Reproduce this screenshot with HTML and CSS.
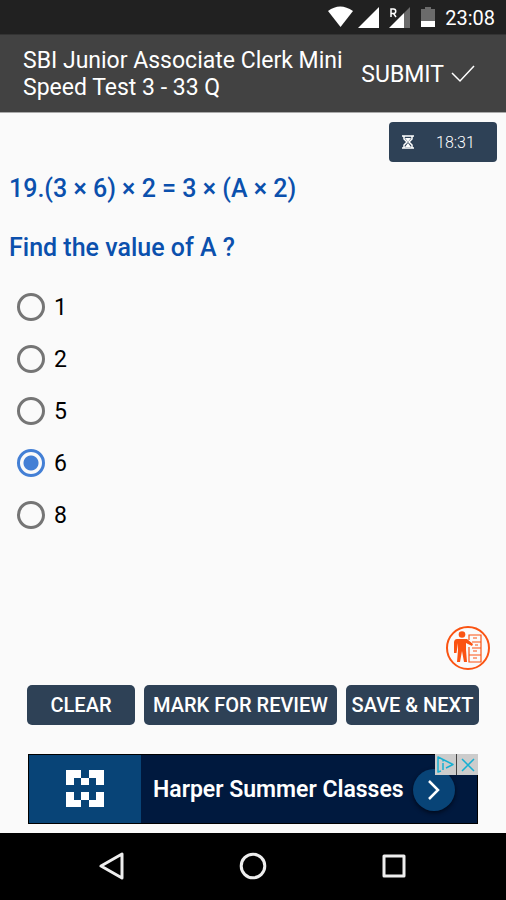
FILE: index.html
```html
<!DOCTYPE html>
<html lang="en">
<head>
<meta charset="utf-8">
<meta name="viewport" content="width=device-width, initial-scale=1">
<title>SBI Junior Associate Clerk Mini Speed Test 3</title>
<link rel="stylesheet" href="styles.css">
</head>
<body>
<div class="status">
  <svg width="110" height="24" viewBox="0 0 110 24" aria-hidden="true">
    <path fill="#fff" d="M0 6Q12-3 25 6L12.500 22Z"/>
    <path fill="#fff" d="M51 2V23H30Z"/>
    <path fill="#6b6b6b" d="M82 2V23H76V8Z"/>
    <path fill="#fff" d="M76 8V23H61Z"/>
    <path fill="none" stroke="#fff" stroke-width="1.500" d="M63 12V4H65.500A2 2 0 0 1 65.500 8.500H63M65.500 8.500L68 12"/>
    <path fill="#6b6b6b" d="M93 4H97V2H103V4H107V16H93Z"/>
    <path fill="#fff" d="M93 16H107V22H93Z"/>
  </svg>
  <span class="clock">23:08</span>
</div>
<header class="appbar">
  <h1 class="title">SBI Junior Associate Clerk Mini Speed Test 3 - 33 Q</h1>
  <button class="submit" type="button">SUBMIT
    <svg width="24" height="18" viewBox="0 0 24 18" aria-hidden="true"><path fill="none" stroke="#fff" stroke-width="1.500" d="M1 8L9 16L23 1"/></svg>
  </button>
</header>
<main class="content">
  <div class="timer">
    <svg width="12" height="14" viewBox="0 0 12 14" aria-hidden="true"><path fill="none" stroke="#fff" stroke-width="1.500" d="M0 1H12M0 13H12M2 1V4L5 7L2 10V13M10 1V4L7 7L10 10V13"/><path fill="#fff" d="M3 3H9L6 7ZM3 12L6 8L9 12Z"/></svg>
    <span class="time">18:31</span>
  </div>
  <form class="quiz">
    <fieldset class="options">
      <legend class="question"><span>19.(3 × 6) × 2 = 3 × (A × 2)</span><span>Find the value of A ?</span></legend>
      <label class="option"><input type="radio" name="answer" value="1">1</label>
      <label class="option"><input type="radio" name="answer" value="2">2</label>
      <label class="option"><input type="radio" name="answer" value="5">5</label>
      <label class="option"><input type="radio" name="answer" value="6" checked>6</label>
      <label class="option"><input type="radio" name="answer" value="8">8</label>
    </fieldset>
  </form>
  <button class="palette" type="button" aria-label="Question list">
    <svg width="46" height="46" viewBox="0 0 46 46" aria-hidden="true">
      <circle cx="23" cy="23" r="21" fill="none" stroke="#fa5312" stroke-width="2"/>
      <circle cx="17" cy="9.500" r="3.300" fill="#fa5312"/>
      <path fill="#fa5312" d="M12 14H22L28 19L27 21L21 18V25L22 37H19L17 26L15 37H12L13 25V18L11.500 28H9V17Q9.500 14 12 14Z"/>
      <path fill="none" stroke="#fa5312" stroke-width="1.200" d="M24 15V10H36V37H24V22M27 17H36M27 23H36M24 30H36M28 13H32M30 20H33M28 26H32M28 33H32"/>
    </svg>
  </button>
  <div class="actions">
    <button class="action" type="button">CLEAR</button>
    <button class="action" type="button">MARK FOR REVIEW</button>
    <button class="action" type="button">SAVE &amp; NEXT</button>
  </div>
  <aside class="ad">
    <div class="logo">
      <svg width="38" height="38" viewBox="0 0 38 38" aria-hidden="true"><path fill="#fff" d="M0 0H15V8H8V15H0ZM23 0H38V15H30V8H23ZM15 8H23V15H15ZM0 22H8V30H15V37H0ZM15 22H23V30H15ZM30 22H38V37H23V30H30Z"/></svg>
    </div>
    <a class="adlink" href="#">
      <span>Harper Summer Classes</span>
      <span class="go"><svg width="12" height="20" viewBox="0 0 12 20" aria-hidden="true"><path fill="none" stroke="#fff" stroke-width="2.500" d="M1 1L10 10L1 19"/></svg></span>
    </a>
    <div class="adtools">
      <button type="button" aria-label="Ad information"><svg width="17" height="17" viewBox="0 0 17 17"><path fill="none" stroke="#16b0d2" stroke-width="1.500" stroke-linejoin="round" d="M4 15L1 16V1L16 8.500L9 12M6 7V14M6 4V5.500"/></svg></button>
      <button type="button" aria-label="Close ad"><svg width="14" height="14" viewBox="0 0 14 14"><path fill="none" stroke="#16b0d2" stroke-width="1.500" d="M1 1L13 13M13 1L1 13"/></svg></button>
    </div>
  </aside>
</main>
<nav class="navbar">
  <button type="button" aria-label="Back"><svg width="28" height="28" viewBox="0 0 28 28"><path d="M24 2V26L3 14Z"/></svg></button>
  <button type="button" aria-label="Home"><svg width="28" height="28" viewBox="0 0 28 28"><circle cx="14" cy="14" r="11.800"/></svg></button>
  <button type="button" aria-label="Recent apps"><svg width="28" height="28" viewBox="0 0 28 28"><rect x="4" y="4" width="20" height="20"/></svg></button>
</nav>
</body>
</html>
```
FILE: styles.css
```css
* { box-sizing: border-box; }

body {
  margin: 0;
  min-height: 100vh;
  display: flex;
  flex-direction: column;
  background: #fafafa;
  color: #000;
  font-family: Roboto, sans-serif;
}

button {
  margin: 0;
  padding: 0;
  border: 0;
  background: none;
  color: #fff;
  font: inherit;
}

svg { display: block; flex: none; }

.status {
  height: 34px;
  padding-right: 11px;
  display: flex;
  align-items: center;
  justify-content: flex-end;
  gap: 7px;
  background: #212121;
}

.clock { padding-top: 2px; color: #fff; font-size: 20px; font-weight: 400; }

.appbar {
  min-height: 79px;
  padding: 1px 31px 0 23px;
  display: flex;
  align-items: center;
  justify-content: space-between;
  gap: 16px;
  background: #424242;
  border-top: 1px solid #333;
  border-bottom: 1px solid #aaa;
  color: #fff;
}

.title { margin: 0; font-size: 23px; line-height: 27px; font-weight: 400; }

.submit {
  display: flex;
  align-items: center;
  gap: 7px;
  font-size: 23px;
  white-space: nowrap;
}

.content {
  flex: 1;
  display: flex;
  flex-direction: column;
  padding: 9px 9px;
}

.timer {
  align-self: flex-end;
  width: 108px;
  height: 40px;
  padding-left: 13px;
  display: flex;
  align-items: center;
  gap: 22px;
  border-radius: 4px;
  background: #2e4156;
  color: #fff;
}

.time { font-size: 16px; font-weight: 300; }

.quiz { flex: 1; }
.options { margin: 0; padding: 0; border: 0; min-width: 0; }

.question {
  padding: 13px 0 19px;
  display: flex;
  flex-direction: column;
  gap: 31px;
  color: #0b50ad;
  font-size: 25px;
  line-height: 28px;
  font-weight: 500;
}

.option {
  height: 52px;
  padding-left: 8px;
  display: flex;
  align-items: center;
  gap: 9px;
  font-size: 23px;
}

.option input {
  appearance: none;
  width: 28px;
  height: 28px;
  margin: 0;
  border: 3px solid #757575;
  border-radius: 50%;
}

.option input:checked {
  border-color: #437fd5;
  background: radial-gradient(circle, #437fd5 7px, transparent 8px);
}

.palette { align-self: flex-end; margin: 0 6px 14px 0; }

.actions {
  padding: 0 18px;
  display: grid;
  grid-template-columns: 108fr 193fr 133fr;
  gap: 9px;
}

.action {
  height: 40px;
  border-radius: 5px;
  background: #2e4156;
  font-size: 20px;
  font-weight: 500;
  white-space: nowrap;
}

.ad {
  position: relative;
  height: 70px;
  margin: 29px 19px 0;
  display: flex;
  border: 1px solid #000;
  background: #00193e;
}

.logo {
  width: 112px;
  display: flex;
  align-items: center;
  justify-content: center;
  background: #084477;
}

.adlink {
  flex: 1;
  padding: 1px 22px 0 12px;
  display: flex;
  align-items: center;
  justify-content: space-between;
  color: #fff;
  font-size: 23px;
  font-weight: 600;
  text-decoration: none;
  white-space: nowrap;
}

.go {
  width: 42px;
  height: 42px;
  display: flex;
  align-items: center;
  justify-content: center;
  border-radius: 50%;
  background: #084477;
  box-shadow: 0 2px 4px #000a1c;
}

.adtools {
  position: absolute;
  top: -1px;
  right: -1px;
  display: flex;
  gap: 1px;
  background: #444;
}

.adtools button {
  width: 21px;
  height: 21px;
  display: flex;
  align-items: center;
  justify-content: center;
  background: #ccc;
}

.navbar {
  height: 67px;
  padding: 0 42px;
  display: grid;
  grid-template-columns: repeat(3, 1fr);
  place-items: center;
  background: #000;
  border-bottom: 1px solid #000;
}

.navbar svg { fill: none; stroke: #eee; stroke-width: 3px; stroke-linejoin: round; }
```
